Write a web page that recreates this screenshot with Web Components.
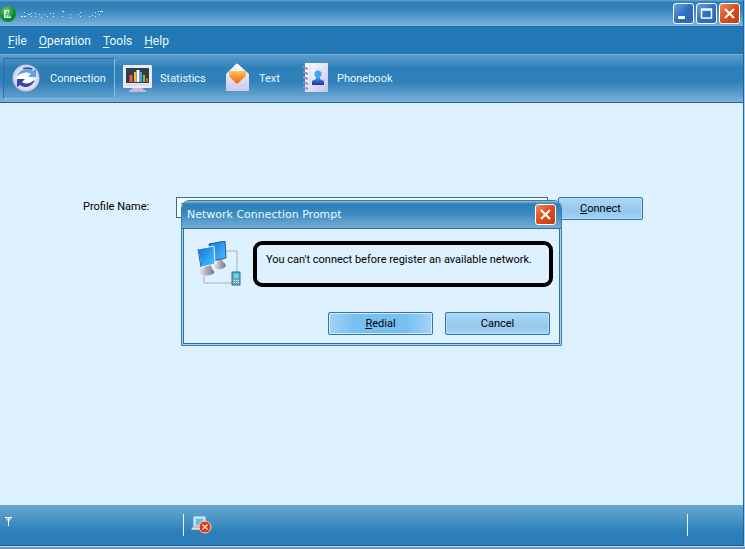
<!DOCTYPE html>
<html lang="en">
<head>
<meta charset="utf-8">
<title>Connection manager</title>
<style>
html, body { margin: 0; height: 100%; }
body { font: 11px/16px Roboto, "DejaVu Sans", sans-serif; color: #000; background: #7b93ad; }
</style>
</head>
<body>
<app-window></app-window>
<script>
function define(name, html) {
  const template = document.createElement('template');
  template.innerHTML = '<style>:host,*{box-sizing:border-box}svg{display:block}</style>' + html;
  customElements.define(name, class extends HTMLElement {
    constructor() {
      super();
      this.attachShadow({ mode: 'open' }).append(template.content.cloneNode(true));
    }
  });
}

define('app-logo', `
<style>:host{display:block}</style>
<svg width="16" height="16" viewBox="0 0 16 16" aria-hidden="true">
<defs><radialGradient id="g" cx=".4" cy=".3"><stop offset="0" stop-color="#6fd474"/><stop offset="1" stop-color="#0c8a26"/></radialGradient></defs>
<circle cx="8" cy="8" r="8" fill="url(#g)"/><path d="M4 4h5v4h-1l3 3v1H4z" fill="#d8f3e5"/><path d="M6 6h2v2H6v3M8 9l1 2" stroke="#3b9070" fill="none"/>
</svg>`);

define('title-marks', `
<style>:host{display:block}</style>
<svg width="88" height="12" viewBox="0 0 88 12" fill="none" stroke="#c9ecff" stroke-width="1" aria-hidden="true">
<path d="M3 8.500h2M6 4.500h1M6 8.500h2M10 6.500h2M13 8.500h1M13 5.500h1M17 5.500h1M17 8.500h1M21 6.500h1M23 9.500h1M26 6.500h1M29 8.500h1M32 5.500h1M35 5.500h1M35 8.500h1M44 3.500h2M44 8.500h1M52 6.500h1M52 9.500h1M60 6.500h1M62 4.500h1M62 8.500h1M71 8.500h1M74 7.500h1M77 4.500h1M77 8.500h1M80 3.500h1M82 3.500h3M81 6.500h1"/>
</svg>`);

define('window-button', `
<style>
:host{display:block}
button{display:grid;place-items:center;width:21px;height:21px;padding:0;border:1px solid #fff;border-radius:3px;background:linear-gradient(135deg,#6ea5e0,#2f6fc0 50%,#2c65b4)}
:host([kind=close]) button{background:linear-gradient(135deg,#f08a5c,#dd4a18 50%,#c83c10)}
.min,.max,.close{display:none}
:host([kind=minimize]) .min,:host([kind=maximize]) .max,:host([kind=close]) .close{display:block}
</style>
<button type="button"><svg width="17" height="17" viewBox="0 0 17 17" fill="none" stroke="#fff" aria-hidden="true">
<path class="min" d="M3 12.500h7" stroke-width="3"/>
<path class="max" d="M3.500 4h10v9h-10zM3 5h11" stroke-width="1.500"/>
<path class="close" d="M4 4l9 9M13 4l-9 9" stroke-width="2.200"/>
</svg></button>`);

define('title-bar', `
<style>
:host{display:flex;align-items:center;height:27px;padding:0 3px 0 0;gap:2px;background:linear-gradient(#6aaad4 0,#2f7fb7 2px,#3584bc 10px,#7db4dc 26px,#1f68a5 26px)}
title-marks{margin-right:auto}
</style>
<app-logo></app-logo><title-marks></title-marks>
<window-button kind="minimize"></window-button><window-button kind="maximize"></window-button><window-button kind="close"></window-button>`);

define('menu-bar', `
<style>
:host{display:flex;align-items:center;gap:12px;height:27px;padding:0 8px;background:#2377b3}
button{border:0;padding:0;background:none;color:#e6fbff;font-family:inherit;font-size:12px;line-height:18px}
u{text-underline-offset:2px}
</style>
<button type="button"><u>F</u>ile</button><button type="button"><u>O</u>peration</button><button type="button"><u>T</u>ools</button><button type="button"><u>H</u>elp</button>`);

define('tool-button', `
<style>
:host{display:block}
button{display:flex;align-items:center;gap:7px;width:100%;height:41px;padding:0 7px;border:1px solid transparent;border-radius:2px;background:none;color:#e6fbff;font:inherit;white-space:nowrap}
span{padding-top:2px}
:host([active]) button{border-color:#236fa8 #85bde2 #85bde2 #236fa8;background:rgba(30,105,165,.12)}
</style>
<button type="button"><slot name="icon"></slot><span><slot></slot></span></button>`);

define('tool-bar', `
<style>
:host{display:flex;align-items:center;height:49px;padding:0 3px;border-bottom:1px solid #205f98;background:linear-gradient(#8bbfe1 0,#5a9dcc 1px,#2e80b8 14px,#3081b9 28px,#7ab1d8 48px)}
.a{width:112px}.b{width:101px}.c{width:78px}
</style>
<tool-button class="a" active>
<svg slot="icon" width="32" height="32" viewBox="0 0 32 32" aria-hidden="true"><defs><radialGradient id="s"><stop offset=".5" stop-color="#fff"/><stop offset="1" stop-color="#c6c3ea"/></radialGradient></defs>
<circle cx="15" cy="16" r="13.500" fill="url(#s)"/><path d="M6 14C9 7 16 5 22 9l3-2v8h-8l3-3c-5-3-9-1-14 2z" fill="#58a3e4"/><path d="M12 6q6-2 10 1l-1 1q-4-2-9-1z" fill="#293d8e"/><path d="M24 18C21 25 14 27 9 23l-3 2v-8h8l-3 3c5 3 8 1 13-2z" fill="#3344ad"/></svg>Connection</tool-button>
<tool-button class="b">
<svg slot="icon" width="30" height="32" viewBox="0 0 30 32" aria-hidden="true"><rect y="3" width="29" height="23" rx="1" fill="#ece9f8"/><rect x="3" y="6" width="23" height="15" fill="#333c48"/><path d="M8 20v-7" stroke="#ec6438" stroke-width="3"/><path d="M12 20v-10" stroke="#f6ba36" stroke-width="2"/><path d="M15 20V8" stroke="#fff" stroke-width="3"/><path d="M18 20v-10" stroke="#38a9ed" stroke-width="2"/><path d="M21 20v-7" stroke="#83c83c" stroke-width="2"/><path d="M24 20v-4" stroke="#ed5538" stroke-width="2"/><path d="M10 26h9l5 4H5z" fill="#c2b8de"/><path d="M3 23h23" stroke="#d0c9e7"/></svg>Statistics</tool-button>
<tool-button class="c">
<svg slot="icon" width="28" height="32" viewBox="0 0 28 32" aria-hidden="true"><defs><linearGradient id="e" x2="0" y2="1"><stop stop-color="#fff"/><stop offset="1" stop-color="#c9c5e8"/></linearGradient><linearGradient id="o" x2="0" y2="1"><stop stop-color="#ffc75c"/><stop offset="1" stop-color="#f45b12"/></linearGradient></defs><path d="M2 12L12 2q1-1 2 0l11 10v17H2z" fill="url(#e)"/><path d="M5 11q0-2 2-2h13q2 0 2 2v3l-8 7q-1 1-2 0l-7-7z" fill="url(#o)"/><path d="M2 29l8-8q3 2 6 0l9 8" fill="#d7d1ed" opacity=".6"/></svg>Text</tool-button>
<tool-button>
<svg slot="icon" width="28" height="32" viewBox="0 0 28 32" aria-hidden="true"><defs><linearGradient id="p" x2="1" y2="1"><stop stop-color="#fff"/><stop offset="1" stop-color="#c5c2e8"/></linearGradient><linearGradient id="u" x2="0" y2="1"><stop stop-color="#41b6f2"/><stop offset="1" stop-color="#282ba5"/></linearGradient></defs><path d="M3 1h23v29H3z" fill="url(#p)"/><path d="M1 5l5 2M1 10l5 2M1 15l5 2M1 20l5 2M1 25l5 2" stroke="#9892b9" stroke-width="2"/><path d="M8 1v29" stroke="#d8d4eb"/><circle cx="16" cy="12" r="3.500" fill="#35aaf0"/><path d="M14 14h4v3l4 2v4H10v-4l4-2z" fill="url(#u)"/></svg>Phonebook</tool-button>`);

define('push-button', `
<style>
:host{display:block}
button{width:100%;height:23px;padding:1px 0 0;border:1px solid #3275ad;border-radius:2px;background:linear-gradient(#aed8f6,#93c8ee 60%,#a2d2f4);color:#000;font:inherit;box-shadow:inset 0 0 0 1px #b6ddf7}
:host([default]) button{background:linear-gradient(90deg,#a2d3f6,#78c0f2 25% 75%,#a2d3f6);box-shadow:inset 0 0 0 1px #d3ebfb}
</style>
<button type="button"><slot></slot></button>`);

define('profile-form', `
<style>
:host{display:flex;align-items:flex-start;padding:94px 100px 0 83px}
label{width:93px;line-height:20px}
select{flex:1;min-width:0;height:21px;padding:0;border:1px solid #2a6ea6;border-radius:0;background:#fff;font:inherit;color:#000}
push-button{width:85px;margin-left:10px}
</style>
<label for="profile">Profile Name:</label><select id="profile"><option>T</option></select><push-button><u>C</u>onnect</push-button>`);

define('status-bar', `
<style>
:host{display:flex;align-items:flex-start;height:41px;padding:9px 55px 0 4px;border-bottom:1px solid #175b96;background:linear-gradient(#69a9d2,#2b7eb8 28px,#2b7eb8)}
.antenna{width:179px;padding-top:3px}
i{width:1px;height:22px;background:#dff4ff}
.net{margin:0 auto 0 7px}
</style>
<span class="antenna"><svg width="9" height="9" viewBox="0 0 9 9" fill="none" stroke="#fff" aria-hidden="true"><path d="M1 .5h7M4.500 0v9M2 1l2.500 3L7 1"/></svg></span>
<i></i>
<svg class="net" width="22" height="20" viewBox="0 0 22 20" aria-hidden="true"><path d="M3 3h11v10H3z" fill="#a9dbf4" stroke="#f3f7fa"/><path d="M5 5h7v6H5z" fill="#73b9e3"/><path d="M1 13h13v3H0z" fill="#e5e0dd" stroke="#77727a" stroke-width=".6"/><circle cx="14" cy="13" r="6" fill="#e33617" stroke="#f9d4c1"/><path d="M11.500 10.500l5 5M16.500 10.500l-5 5" stroke="#fff4b8" stroke-width="1.300"/></svg>
<i></i>`);

define('message-bubble', `
<style>:host{display:block;border:4px solid #000;border-radius:9px;padding:7px 9px 15px;min-height:46px}</style><slot></slot>`);

define('prompt-dialog', `
<style>
:host{display:block;width:381px;border:1px solid #3b7db3;border-radius:8px 8px 0 0;background:#a8d4f2;padding:0 1px 1px;overflow:hidden}
header{display:flex;align-items:center;justify-content:space-between;height:28px;margin:0 -1px;padding:0 5px;border-bottom:1px solid #2a6da7;background:linear-gradient(#8cc0e4 0,#2d7fb8 3px,#3a88bf 12px,#75aed6);color:#e6fbff}
h1{margin:0;font:11px/16px "DejaVu Sans",sans-serif}
.body{border:1px solid #2b6ea8;border-top:0;background:#ddf1ff;padding:12px 6px 8px 13px}
.row{display:flex;gap:10px}
message-bubble{flex:1}
.actions{display:flex;justify-content:flex-end;gap:12px;padding:25px 3px 0 0}
push-button{width:105px}
</style>
<header><h1>Network Connection Prompt</h1><window-button kind="close"></window-button></header>
<div class="body"><div class="row">
<svg width="46" height="46" viewBox="0 0 46 46" aria-hidden="true"><defs><linearGradient id="m" x2="1" y2="1"><stop stop-color="#1670dc"/><stop offset="1" stop-color="#45c5ff"/></linearGradient><linearGradient id="b" x2="1"><stop stop-color="#f4f2f7"/><stop offset="1" stop-color="#777486"/></linearGradient></defs>
<path d="M28 10h12v21M7 35v7h28" fill="none" stroke="#a9adb5"/>
<path d="M20 18l5-1 1 4q5 3 1 6-7 3-11-1 0-3 4-4z" fill="url(#b)"/><path d="M12 3l16-3 1 17-14 3z" fill="url(#m)" stroke="#2559a6"/>
<path d="M8 24h6l1 4q4 3 1 5-8 4-15-1-1-4 6-5z" fill="url(#b)"/><path d="M1 8l16-3 1 18-14 3z" fill="url(#m)" stroke="#e9f4ff"/><path d="M1 8l3 18" stroke="#2559a6"/>
<path d="M35 31h8v13h-8z" fill="#65a9bd" stroke="#356c91"/><path d="M37 33h5v4h-5z" fill="#57e0e0"/><path d="M37 39.500h5M37 41.500h5" stroke="#fff" stroke-dasharray="1 1"/></svg>
<message-bubble>You can't connect before register an available network.</message-bubble></div>
<div class="actions"><push-button default><u>R</u>edial</push-button><push-button>Cancel</push-button></div></div>`);

define('app-window', `
<style>
:host{display:grid;position:relative;min-height:100%;padding-bottom:2px}
.frame{display:flex;flex-direction:column;border-right:1px solid #a6d2ee;border-bottom:1px solid #b4dbf4}
.inner{display:flex;flex:1;flex-direction:column;border-right:1px solid #1f639d;background:#ddf1ff}
main{flex:1}
.overlay{position:absolute;inset:0;display:grid;place-content:center;padding:0 2px 3px 0;pointer-events:none}
prompt-dialog{pointer-events:auto}
</style>
<div class="frame"><div class="inner"><title-bar></title-bar><menu-bar></menu-bar><tool-bar></tool-bar><main><profile-form></profile-form></main><status-bar></status-bar></div></div>
<div class="overlay"><prompt-dialog role="dialog" aria-label="Network Connection Prompt"></prompt-dialog></div>`);
</script>
</body>
</html>
